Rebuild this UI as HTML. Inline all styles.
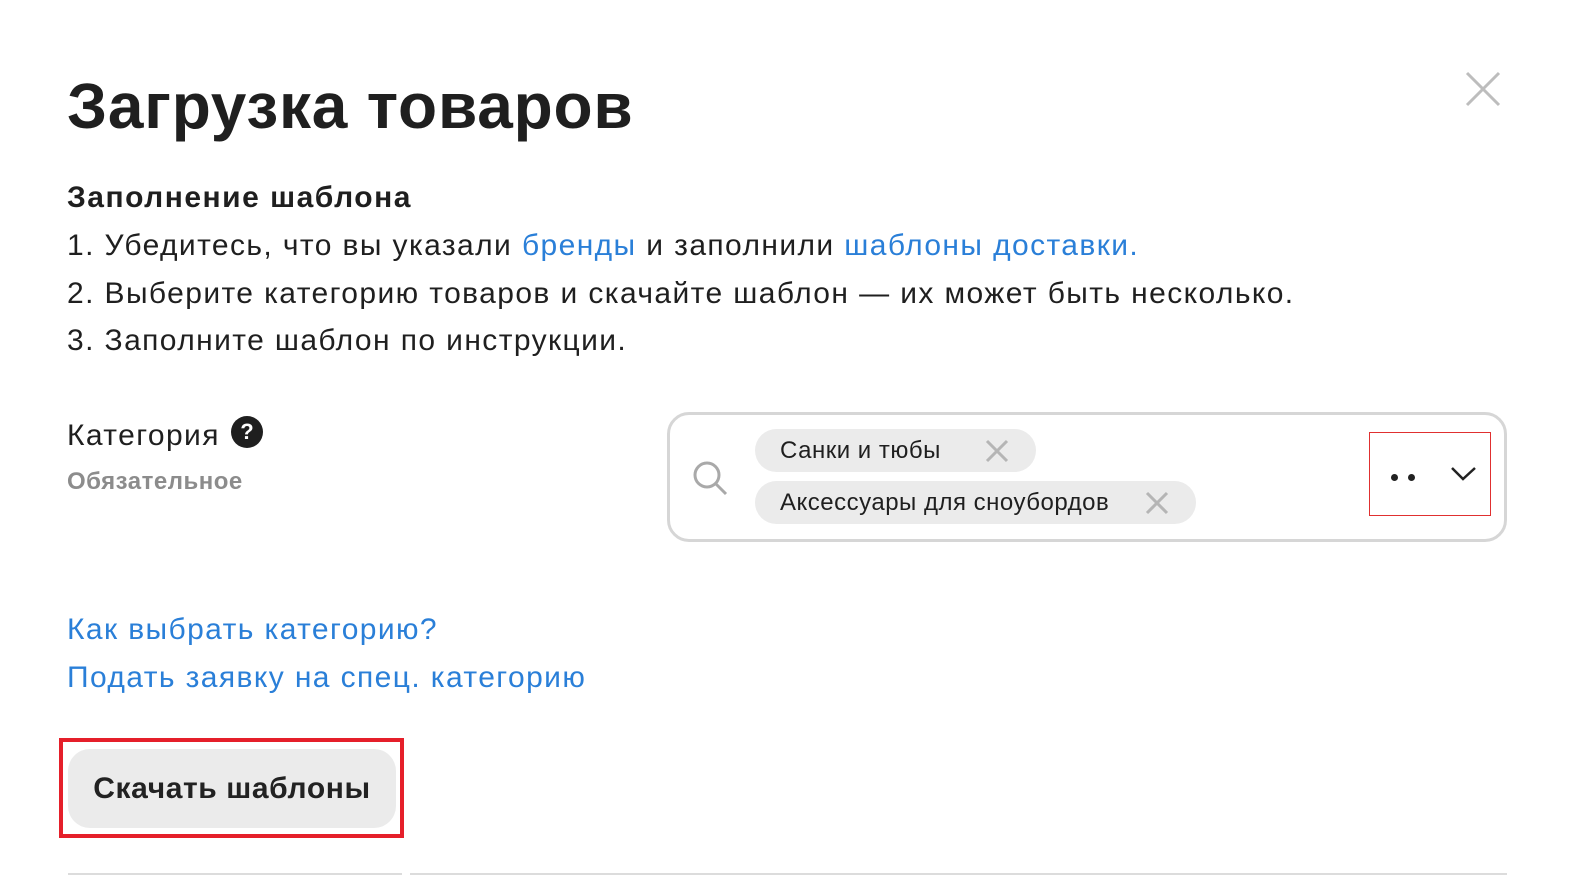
<!DOCTYPE html>
<html><head><meta charset="utf-8"><style>
body{margin:0;width:1586px;height:896px;background:#fff;font-family:"Liberation Sans","Noto Sans CJK SC",sans-serif;color:#1f1f1f;position:relative;overflow:hidden}
.a{position:absolute;white-space:nowrap}
h1{position:absolute;left:67px;top:66px;margin:0;font-size:64px;font-weight:bold;letter-spacing:0.8px;line-height:80px}
.t{font-size:30px;line-height:48px;letter-spacing:1.4px}
.l{color:#2a7fd8}
.chip{position:absolute;background:#ebebeb;border-radius:22px;height:43px;font-size:24px;line-height:43px;padding-left:25px;box-sizing:border-box;letter-spacing:0.5px}
</style></head><body>
<h1>Загрузка товаров</h1>
<svg class="a" style="left:1465px;top:71px" width="36" height="36"><path d="M2 2L34 34M34 2L2 34" stroke="#bdbdbd" stroke-width="3"/></svg>
<div class="a t" style="left:67px;top:174px;font-weight:bold;letter-spacing:1.5px">Заполнение шаблона</div>
<div class="a t" style="left:67px;top:222px">1. Убедитесь, что вы указали <span class="l">бренды</span> и заполнили <span class="l">шаблоны доставки.</span></div>
<div class="a t" style="left:67px;top:270px">2. Выберите категорию товаров и скачайте шаблон — их может быть несколько.</div>
<div class="a t" style="left:67px;top:317px">3. Заполните шаблон по инструкции.</div>
<div class="a t" style="left:67px;top:412px">Категория</div>
<div class="a" style="left:231px;top:416px;width:32px;height:32px;border-radius:50%;background:#1f1f1f;color:#fff;font-weight:bold;font-size:22px;line-height:32px;text-align:center">?</div>
<div class="a" style="left:67px;top:468px;font-size:24px;font-weight:bold;color:#8c8c8c;letter-spacing:0.5px">Обязательное</div>
<div class="a" style="left:667px;top:412px;width:840px;height:130px;box-sizing:border-box;border:3px solid #d6d6d6;border-radius:22px"></div>
<svg class="a" style="left:690px;top:458px" width="40" height="40"><circle cx="17" cy="17" r="12" fill="none" stroke="#a9a9a9" stroke-width="3"/><path d="M26 26L36 36" stroke="#a9a9a9" stroke-width="3"/></svg>
<div class="chip" style="left:755px;top:429px;width:281px">Санки и тюбы</div>
<svg class="a" style="left:985px;top:439px" width="24" height="24"><path d="M2 2L22 22M22 2L2 22" stroke="#b5b5b5" stroke-width="3"/></svg>
<div class="chip" style="left:755px;top:481px;width:441px">Аксессуары для сноубордов</div>
<svg class="a" style="left:1145px;top:491px" width="24" height="24"><path d="M2 2L22 22M22 2L2 22" stroke="#b5b5b5" stroke-width="3"/></svg>
<div class="a" style="left:1369px;top:432px;width:120px;height:82px;border:1px solid #e03030"></div>
<div class="a" style="left:1391px;top:474px;width:7px;height:7px;border-radius:50%;background:#222"></div>
<div class="a" style="left:1408px;top:474px;width:7px;height:7px;border-radius:50%;background:#222"></div>
<svg class="a" style="left:1450px;top:465px" width="28" height="18"><path d="M2 3L13 14L25 3" fill="none" stroke="#222" stroke-width="2.5"/></svg>
<div class="a t l" style="left:67px;top:606px">Как выбрать категорию?</div>
<div class="a t l" style="left:67px;top:654px">Подать заявку на спец. категорию</div>
<div class="a" style="left:59px;top:738px;width:337px;height:92px;border:4px solid #e51f2a"></div>
<div class="a" style="left:68px;top:749px;width:328px;height:79px;background:#ebebeb;border-radius:22px;font-size:30px;font-weight:bold;line-height:79px;text-align:center;color:#222;letter-spacing:0.6px">Скачать шаблоны</div>
<div class="a" style="left:68px;top:873px;width:334px;height:2px;background:#dcdcdc"></div>
<div class="a" style="left:410px;top:873px;width:1097px;height:2px;background:#dcdcdc"></div>
</body></html>
